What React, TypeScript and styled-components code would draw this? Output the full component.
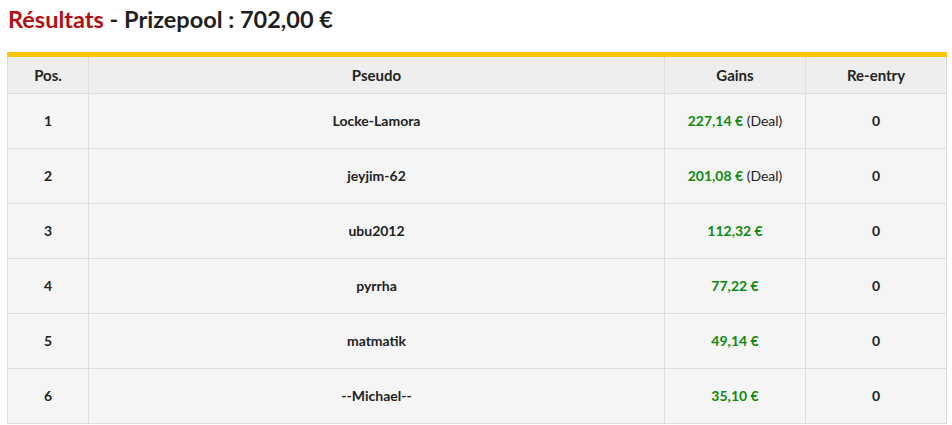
import React from "react";
import styled, { createGlobalStyle } from "styled-components";

const Global = createGlobalStyle`
  html, body { margin: 0; padding: 0; background: #fff; }
  body { font-family: Lato, "Open Sans", sans-serif; color: #222; }
`;

const Page = styled.div`
  padding: 5px 5px 0 7px;
`;

const Title = styled.h2`
  margin: 0 0 0 1px;
  font-size: 23.5px;
  font-weight: 700;
  line-height: 28px;
  color: #1f1f1f;
`;

const Red = styled.span`
  color: #b30f12;
`;

const Table = styled.table`
  margin-top: 19px;
  width: 940px;
  table-layout: fixed;
  border-collapse: collapse;
  border-top: 5px solid #fbc30a;
  font-size: 14px;
`;

const Th = styled.th<{ $w?: number }>`
  width: ${(p) => (p.$w ? `${p.$w}px` : "auto")};
  height: 36px;
  padding: 0;
  background: #eeeeee;
  border: 1px solid #dddddd;
  border-top: none;
  font-size: 15px;
  font-weight: 700;
  color: #222;
  text-align: center;
`;

const Td = styled.td`
  height: 53px;
  padding: 0 0 1px;
  background: #f5f5f5;
  border: 1px solid #dddddd;
  font-weight: 700;
  color: #222;
  text-align: center;
`;

const Money = styled.span`
  color: #0c8a0c;
  font-weight: 700;
`;

const Note = styled.span`
  font-weight: 400;
  color: #222;
`;

const rows = [
  { pos: 1, name: "Locke-Lamora", gain: "227,14 €", deal: true, re: 0 },
  { pos: 2, name: "jeyjim-62", gain: "201,08 €", deal: true, re: 0 },
  { pos: 3, name: "ubu2012", gain: "112,32 €", deal: false, re: 0 },
  { pos: 4, name: "pyrrha", gain: "77,22 €", deal: false, re: 0 },
  { pos: 5, name: "matmatik", gain: "49,14 €", deal: false, re: 0 },
  { pos: 6, name: "--Michael--", gain: "35,10 €", deal: false, re: 0 },
];

export default function App() {
  return (
    <>
      <Global />
      <Page>
        <Title>
          <Red>Résultats</Red> - Prizepool : 702,00 €
        </Title>
        <Table>
          <thead>
            <tr>
              <Th $w={80}>Pos.</Th>
              <Th>Pseudo</Th>
              <Th $w={140}>Gains</Th>
              <Th $w={140}>Re-entry</Th>
            </tr>
          </thead>
          <tbody>
            {rows.map((r) => (
              <tr key={r.pos}>
                <Td>{r.pos}</Td>
                <Td>{r.name}</Td>
                <Td>
                  <Money>{r.gain}</Money>
                  {r.deal && <Note> (Deal)</Note>}
                </Td>
                <Td>{r.re}</Td>
              </tr>
            ))}
          </tbody>
        </Table>
      </Page>
    </>
  );
}
